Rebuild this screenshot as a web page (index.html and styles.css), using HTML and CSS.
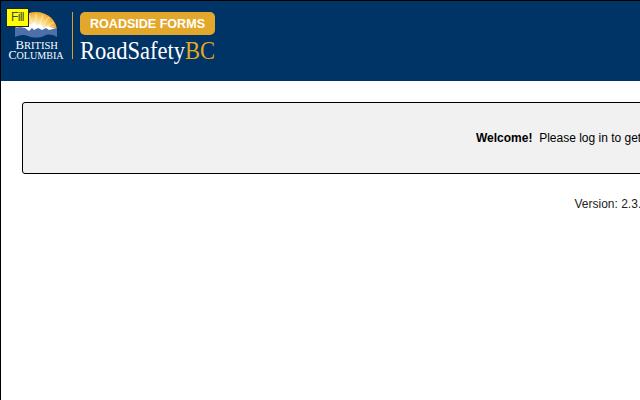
FILE: index.html
```html
<!DOCTYPE html>
<html lang="en">
<head>
<meta charset="utf-8">
<title>Roadside Forms</title>
<link rel="stylesheet" href="styles.css">
</head>
<body>
<div class="page">
  <header class="header">
    <svg class="logo" width="220" height="66" viewBox="0 0 220 66" role="img">
      <defs>
        <radialGradient id="sun" gradientUnits="userSpaceOnUse" cx="36" cy="33" r="22">
          <stop offset="0.3" stop-color="#fffbe8"/>
          <stop offset="0.65" stop-color="#fad377"/>
          <stop offset="1" stop-color="#eda526"/>
        </radialGradient>
      </defs>
      <path fill="url(#sun)" d="M15 31A21 19 0 0 1 57 31Z"/>
      <path stroke="#fff2c5" stroke-width=".7" d="M36 27V14M33 27L29 15M39 27L43 15M31 27L23 17M42 27L49 17M44 28L54 22M28 28L18 22"/>
      <path fill="#fff" d="M15 29L20 25L24 27L27 23L31 25L34 22L37 26L40 24L44 28L48 26L52 28L57 29V32H15Z"/>
      <path fill="#4d70ab" d="M15 28L20 27L25 28L29 31L32 28L34 30L38 28L42 30L46 28L49 30L57 28V37C51 34 48 34 44 36C39 38 33 38 28 36C23 34 20 35 15 37Z"/>
      <text class="province" x="15.500" y="49.300" textLength="42.500" lengthAdjust="spacingAndGlyphs"><tspan class="cap">B</tspan>RITISH</text>
      <text class="province" x="8.500" y="59" textLength="55" lengthAdjust="spacingAndGlyphs"><tspan class="cap">C</tspan>OLUMBIA</text>
      <path fill="#d99f2b" d="M72 12h1v47h-1z"/>
      <rect x="80" y="12" width="135" height="23" rx="5" fill="#e3a82b"/>
      <text class="forms" x="90" y="28" textLength="115" lengthAdjust="spacingAndGlyphs">ROADSIDE FORMS</text>
      <text class="brand" x="80" y="59" textLength="135" lengthAdjust="spacingAndGlyphs">RoadSafety<tspan class="gold">BC</tspan></text>
    </svg>
    <span class="fill">Fill</span>
  </header>
  <main class="content">
    <div class="welcome"><b>Welcome!</b>&nbsp; Please log in to get started.</div>
    <div class="version">Version: 2.3.1</div>
  </main>
</div>
</body>
</html>
```
FILE: styles.css
```css
html, body {
  margin: 0;
  height: 100%;
  overflow: hidden;
}
body {
  background: #fff;
  font: 12px/16px "Liberation Sans", Arial, sans-serif;
  color: #000;
}
.page {
  box-sizing: border-box;
  height: 100%;
  border-top: 1px solid #000;
  border-left: 1px solid #000;
  overflow: hidden;
}
.header {
  position: relative;
  display: flex;
  align-items: flex-start;
  height: 80px;
  background: #003366;
}
.logo {
  display: block;
  margin: -1px 0 0 -1px;
}
.province {
  font: 9.5px "Liberation Serif", serif;
  fill: #fff;
}
.cap {
  font-size: 11.5px;
}
.forms {
  font: bold 12.5px "Liberation Sans", sans-serif;
  fill: #fff;
}
.brand {
  font: 25px "Liberation Serif", serif;
  fill: #fff;
}
.gold {
  fill: #e5a823;
}
.fill {
  position: absolute;
  left: 5px;
  top: 7px;
  box-sizing: border-box;
  width: 23px;
  height: 19px;
  padding-left: 4px;
  border: 1px solid #222;
  background: #ff0;
  color: #444;
  font-size: 12px;
  letter-spacing: -0.6px;
  line-height: 17px;
}
.content {
  padding: 21px 0 0 21px;
}
.welcome {
  box-sizing: border-box;
  width: 800px;
  height: 72px;
  padding: 27px 0 0 453px;
  border: 1px solid #000;
  border-radius: 3px;
  background: #f1f1f1;
  white-space: nowrap;
}
.version {
  margin: 22px 0 0 552.5px;
  white-space: nowrap;
  color: #222;
}
```
